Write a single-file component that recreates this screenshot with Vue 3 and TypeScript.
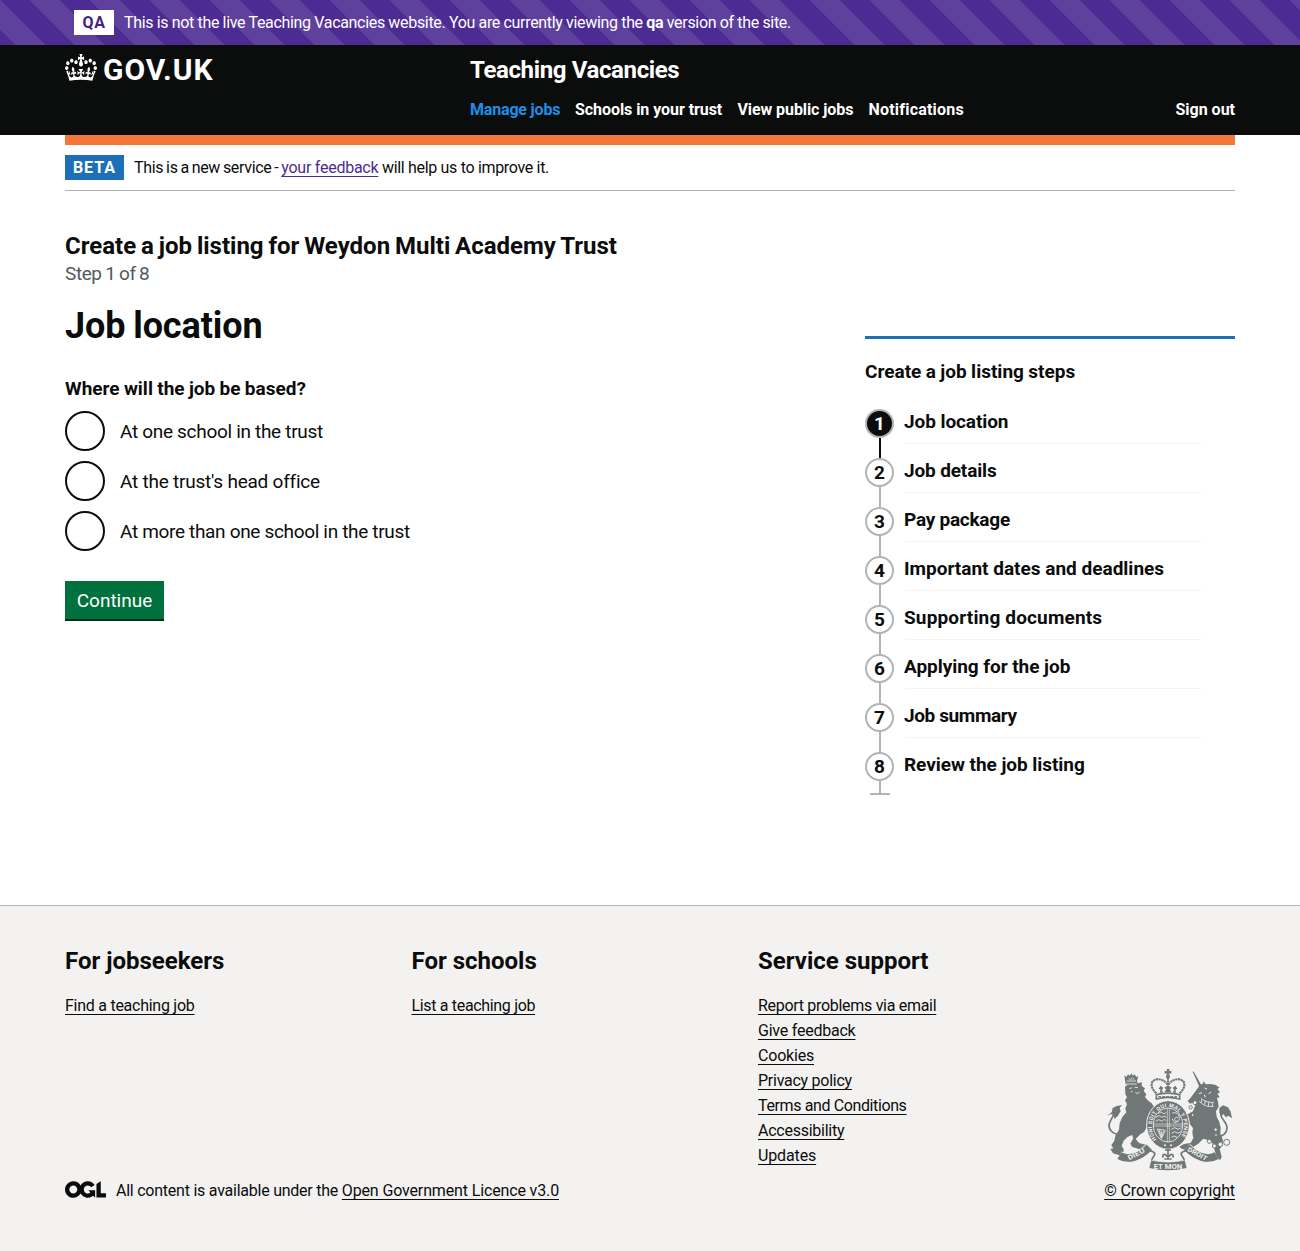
<script setup lang="ts">
interface NavLink {
  label: string
  width: number
  tracking: number
  active?: boolean
}

interface Label {
  text: string
  tracking: number
}

interface FooterSection {
  title: string
  links: Label[]
}

const navLinks: NavLink[] = [
  { label: 'Manage jobs', width: 105, tracking: -0.18, active: true },
  { label: 'Schools in your trust', width: 162.5, tracking: -0.06 },
  { label: 'View public jobs', width: 131, tracking: -0.09 },
  { label: 'Notifications', width: 96, tracking: 0.2 },
]

const options: Label[] = [
  { text: 'At one school in the trust', tracking: -0.31 },
  { text: "At the trust's head office", tracking: -0.23 },
  { text: 'At more than one school in the trust', tracking: -0.33 },
]

const steps: Label[] = [
  { text: 'Job location', tracking: -0.08 },
  { text: 'Job details', tracking: -0.14 },
  { text: 'Pay package', tracking: -0.25 },
  { text: 'Important dates and deadlines', tracking: 0 },
  { text: 'Supporting documents', tracking: 0.16 },
  { text: 'Applying for the job', tracking: -0.05 },
  { text: 'Job summary', tracking: -0.38 },
  { text: 'Review the job listing', tracking: -0.05 },
]
const currentStep = 0

const footerSections: FooterSection[] = [
  { title: 'For jobseekers', links: [{ text: 'Find a teaching job', tracking: -0.26 }] },
  { title: 'For schools', links: [{ text: 'List a teaching job', tracking: -0.33 }] },
  {
    title: 'Service support',
    links: [
      { text: 'Report problems via email', tracking: -0.3 },
      { text: 'Give feedback', tracking: -0.23 },
      { text: 'Cookies', tracking: -0.2 },
      { text: 'Privacy policy', tracking: -0.26 },
      { text: 'Terms and Conditions', tracking: -0.38 },
      { text: 'Accessibility', tracking: -0.25 },
      { text: 'Updates', tracking: -0.13 },
    ],
  },
]

const spacing = (px: number) => ({ letterSpacing: px + 'px' })
</script>

<template>
  <div class="page">
    <div class="env">
      <strong class="env-tag">QA</strong>
      <span class="env-text">This is not the live Teaching Vacancies website. You are currently viewing the <b>qa</b> version of the site.</span>
    </div>

    <header class="header">
      <div class="container header-inner">
        <a class="brand">
          <svg class="crown" viewBox="0 0 132 97" preserveAspectRatio="none" aria-hidden="true">
            <path fill="currentColor" d="M25 30.2c3.5 1.5 7.7-.2 9.1-3.7 1.5-3.6-.2-7.8-3.9-9.2-3.6-1.4-7.6.3-9.1 3.9-1.4 3.5.3 7.5 3.9 9zM9 39.5c3.6 1.5 7.8-.2 9.2-3.7 1.5-3.6-.2-7.8-3.9-9.1-3.6-1.5-7.6.2-9.1 3.8-1.4 3.5.3 7.5 3.8 9zM4.4 57.2c3.5 1.5 7.7-.2 9.1-3.8 1.5-3.6-.2-7.7-3.9-9.1-3.5-1.5-7.6.3-9.1 3.8-1.4 3.5.3 7.6 3.9 9.1zm38.3-21.4c3.5 1.5 7.7-.2 9.1-3.8 1.5-3.6-.2-7.7-3.9-9.1-3.6-1.5-7.6.3-9.1 3.8-1.3 3.6.4 7.7 3.9 9.1zm64.4-5.6c-3.6 1.5-7.8-.2-9.1-3.7-1.5-3.6.2-7.8 3.8-9.2 3.6-1.4 7.7.3 9.2 3.9 1.3 3.5-.4 7.5-3.9 9zm15.9 9.3c-3.6 1.5-7.7-.2-9.1-3.7-1.5-3.6.2-7.8 3.7-9.1 3.6-1.5 7.7.2 9.2 3.8 1.5 3.5-.3 7.5-3.8 9zm4.7 17.7c-3.6 1.5-7.8-.2-9.2-3.8-1.5-3.6.2-7.7 3.9-9.1 3.6-1.5 7.7.3 9.2 3.8 1.3 3.5-.4 7.6-3.9 9.1zM89.3 35.8c-3.6 1.5-7.8-.2-9.2-3.8-1.4-3.6.2-7.7 3.9-9.1 3.6-1.5 7.7.3 9.2 3.8 1.4 3.6-.3 7.7-3.9 9.1zM69.7 17.7l8.9 4.7V9.3l-8.9 2.8c-.2-.3-.5-.6-.9-.9L72.4 0H59.6l3.5 11.2c-.3.3-.6.5-.9.9l-8.8-2.8v13.1l8.8-4.7c.3.3.6.7.9.9l-5 15.4v.1c-.2.8-.4 1.6-.4 2.4 0 4.1 3.1 7.5 7 8.1h.2c.3 0 .7.1 1 .1.4 0 .7 0 1-.1h.2c4-.6 7.1-4.1 7.1-8.1 0-.8-.1-1.7-.4-2.4V34l-5.1-15.4c.4-.2.7-.6 1-.9zM66 92.8c16.9 0 32.8 1.1 47.1 3.2 4-16.9 8.9-26.7 14-33.5l-9.6-3.4c1 4.9 1.1 7.2 0 10.2-1.5-1.4-3-4.3-4.2-8.7L108.6 76c2.8-2 5-3.2 7.5-3.3-4.4 9.4-10 11.9-13.6 11.2-4.3-.8-6.3-4.6-5.6-7.9 1-4.7 5.7-5.9 8-.5 4.3-8.7-3-11.4-7.6-8.8 7.1-7.2 7.9-13.5 2.1-21.1-8 6.1-8.1 12.3-4.5 20.8-4.7-5.4-12.1-2.5-9.5 6.2 3.4-5.2 7.9-2 7.2 3.1-.6 4.3-6.4 7.8-13.5 7.2-10.3-.9-10.9-8-11.2-13.8 2.5-.5 7.1 1.8 11 7.3L80.2 60c-4.1 4.4-8 5.3-12.3 5.4 1.4-4.4 8-11.6 8-11.6H55.5s6.4 7.2 7.9 11.6c-4.2-.1-8-1-12.3-5.4l1.4 16.4c3.9-5.5 8.5-7.7 10.9-7.3-.3 5.8-.9 12.8-11.1 13.8-7.2.6-12.9-2.9-13.5-7.2-.7-5 3.8-8.3 7.1-3.1 2.7-8.7-4.6-11.6-9.4-6.2 3.7-8.5 3.6-14.7-4.6-20.8-5.8 7.6-5 13.9 2.2 21.1-4.7-2.6-11.9.1-7.7 8.8 2.3-5.5 7.1-4.2 8.1.5.7 3.3-1.3 7.1-5.7 7.9-3.5.7-9-1.8-13.5-11.2 2.5.1 4.7 1.3 7.5 3.3l-4.7-15.4c-1.2 4.4-2.7 7.2-4.3 8.7-1.1-3-.9-5.3 0-10.2l-9.5 3.4c5 6.9 9.9 16.7 14 33.5 14.8-2.1 30.8-3.2 47.7-3.2z" />
          </svg>
          <span class="brand-text">GOV.UK</span>
        </a>
        <div class="header-content">
          <a class="service-name">Teaching Vacancies</a>
          <nav class="nav">
            <a v-for="link in navLinks" :key="link.label" class="nav-link" :class="{ active: link.active }" :style="{ width: link.width + 'px', ...spacing(link.tracking) }">{{ link.label }}</a>
            <a class="nav-link sign-out">Sign out</a>
          </nav>
        </div>
      </div>
    </header>

    <div class="container">
      <div class="phase">
        <strong class="phase-tag">BETA</strong>
        <span class="phase-text"><span class="phase-lead">This is a new service - </span><a class="visited">your feedback</a> will help us to improve it.</span>
      </div>

      <div class="columns">
        <main class="main">
          <h2 class="title">Create a job listing for Weydon Multi Academy Trust</h2>
          <div class="caption">Step 1 of 8</div>
          <h1 class="heading">Job location</h1>
          <div class="legend">Where will the job be based?</div>
          <label v-for="option in options" :key="option.text" class="radio">
            <span class="radio-ring"></span>
            <span class="radio-label" :style="spacing(option.tracking)">{{ option.text }}</span>
          </label>
          <button class="button" type="button">Continue</button>
        </main>

        <aside class="sidebar">
          <h2 class="sidebar-title">Create a job listing steps</h2>
          <ol class="steps">
            <li v-for="(step, i) in steps" :key="step.text" class="step" :class="{ current: i === currentStep }">
              <div class="rail">
                <span class="number">{{ i + 1 }}</span>
                <span class="line"></span>
              </div>
              <div class="step-name" :style="spacing(step.tracking)">{{ step.text }}</div>
            </li>
          </ol>
        </aside>
      </div>
    </div>

    <footer class="footer">
      <div class="container footer-inner">
        <div class="footer-main">
          <div class="footer-nav">
            <section v-for="section in footerSections" :key="section.title">
              <h2 class="footer-title">{{ section.title }}</h2>
              <ul class="footer-list">
                <li v-for="link in section.links" :key="link.text"><a class="footer-link" :style="spacing(link.tracking)">{{ link.text }}</a></li>
              </ul>
            </section>
          </div>
          <div class="licence">
            <svg class="ogl" viewBox="0 0 483.2 195.7" aria-hidden="true">
              <path fill="currentColor" d="M421.5 142.8V.1l-50.7 32.3v161.1h112.4v-50.7zm-122.3-9.6A47.12 47.12 0 0 1 221 97.8c0-26 21.1-47.1 47.1-47.1 16.7 0 31.4 8.7 39.7 21.8l42.7-27.2A97.63 97.63 0 0 0 268.1 0c-36.5 0-68.3 20.1-85.1 49.7A98 98 0 0 0 97.8 0C43.9 0 0 43.9 0 97.8s43.9 97.8 97.8 97.8c36.5 0 68.3-20.1 85.1-49.7a97.76 97.76 0 0 0 149.6 25.4l19.4 22.2h3v-87.8h-80l24.3 27.5zM97.8 145c-26 0-47.1-21.1-47.1-47.1s21.1-47.1 47.1-47.1 47.1 21.1 47.1 47.1S123.8 145 97.8 145" />
            </svg>
            <span class="licence-text">All content is available under the <a class="footer-link licence-link">Open Government Licence v3.0</a></span>
          </div>
        </div>
        <div class="copyright">
          <svg class="crest" viewBox="51 27 375 306" aria-hidden="true">
            <defs>
              <path id="garter" d="M201 240A48 57 0 1 1 267 240" />
            </defs>
            <g fill="#6f7777">
              <!-- lion -->
              <path d="M103 46l6 5 5-8 6 4 4-7 5 7 5-4 5 8 6-3-4 14 2 9-36 3zM105 80l12-9 20 0 19-4-1 11 10 7-4 8 8 10-4 8 8 10 12 9 9 13-7 6 6 12-5 16-6 12 3 15-12-9-10 20-12 8-14 14 10 12 24 6-4 8 8 6-28-2-20-6-6-10 9-16-4-10-14 6-11 11-6 16 6 9-1 14-12 5-19-6-8-13 9-2-6-9 9-14 3-15 11-18 2-20 8-18 12-14-3-12 5-12-6-12 6-9-5-9z" />
              <path d="M92 224c-18 0-34-10-35-26-1-16 17-28 15-44" fill="none" stroke="#6f7777" stroke-width="5" />
              <path d="M51 167l14-10 3-13 12-6 16-3-7 9 3 9-8 14-11 10-2-12-8-3z" />
              <!-- unicorn -->
              <path d="M307 33l5 4 22 38-6 5zM330 75l8-3 2-8 8 9 14-1 15 3 12 8-7 4 8 10-8 4 7 11-8 2 3 12 2 14-8 14 2 16 8 16 4 17-1 18 8 20-3 18-7 8 6 24-4 8-20-3 7-12-5-16-6-19-14-9-13-4-16 16-14 8-12 10-22-3-8-7 14-8 20-3 8-15-3-16 2-14-14-17-12-5-3 13 8 9-8 10-11-5 2-16-13-16 5-13 15-6 15 5 16-9 6-16-1-12-14 5-7-8 9-10z" />
              <path d="M385 229c13 0 26-10 26-25 0-19-19-26-19-42 0-8 4-11 8-15" fill="none" stroke="#6f7777" stroke-width="5" />
              <path d="M388 144l11-8 15 6 8 13 4 20-11-8-7 5-8-10-5 6-7-10z" />
              <ellipse cx="234" cy="195" rx="64" ry="73" stroke="#f3f2f1" stroke-width="3" />
            </g>
            <!-- motto scroll -->
            <g fill="none" stroke="#6f7777">
              <path d="M88 287C116 303 150 290 178 262M380 287C352 303 318 290 290 262" stroke="#f3f2f1" stroke-width="28" />
              <path d="M88 287C116 303 150 290 178 262M380 287C352 303 318 290 290 262" stroke-width="23" />
              <path d="M176 272c12 2 22 5 17 14-4 8-12 12-6 20M292 272c-12 2-22 5-17 14 4 8 12 12 6 20" stroke-width="5" />
              <path d="M181 312Q234 325 287 312" stroke-width="24" />
              <path d="M225 270h18M234 268v30M220 293c-6-11 8-14 10-3M248 293c6-11-8-14-10-3M223 297h22" stroke-width="5" />
            </g>
            <!-- royal crown -->
            <g fill="none" stroke="#6f7777">
              <path d="M199 100c-21-20-17-38 0-42 13-2 26 4 34 16M269 100c21-20 17-38 0-42-13-2-26 4-34 16" stroke-width="6.5" stroke-dasharray="7 1.5" />
              <path d="M234 53v44" stroke-width="6" stroke-dasharray="6 2" />
              <path d="M199 104c22-6 48-6 70 0v13c-22-6-48-6-70 0z" stroke-width="5" />
              <path d="M205 110h58" stroke-width="4" stroke-dasharray="8 4" />
            </g>
            <g fill="#6f7777">
              <path d="M230 27h9l-2 7 7-2v9l-7-2 2 7h-10l2-7-7 2v-9l7 2z" />
              <circle cx="234" cy="50" r="6" />
              <path d="M209 98l3-9-6-3 6-9 8 7-4 5 3 9zM259 98l-3-9 6-3-6-9-8 7 4 5-3 9zM224 97l4-9-5-5 11-7 11 7-5 5 4 9z" />
            </g>
            <g fill="none" stroke="#f3f2f1">
              <ellipse cx="234" cy="195" rx="44" ry="51" stroke-width="2.5" />
              <path d="M232 146v100M190 192h88M238 146v100M190 198h88" stroke-width="1.8" />
              <path d="M197 172l11-5 8 5 6-4 7 4M197 184l9-5 10 5 7-6 6 5M205 160l8-4 8 5 8-3M246 160c8-5 20 0 22 11s-8 16-13 10 6-13 10-7M246 176l8 12 12-5M244 208l10-5 10 5 10-5M244 220l10-5 10 5 8-5M244 232l8-4 10 4M202 207l24 4-12 25zM207 210l8 22M213 212l3 18M220 213l-2 14" stroke-width="2.5" />
              <path d="M118 86l8-3M134 82l10 1M122 96l6-2M136 97l7 4 6-5M110 63h28M116 55l5 4 6-5 6 5M106 72h34" stroke-width="2.5" />
              <path d="M344 84l7 3M327 101l9-3M356 101l7-5M343 104l3 8" stroke-width="3" />
              <path d="M328 124c14 14 28 17 43 15M333 115c12 10 26 13 39 12M336 118l-3 10M346 122l-2 11M357 126l-2 12M367 127v12" stroke-width="2.5" />
              <path d="M180 300Q234 312 288 300" stroke-width="2" />
            </g>
            <g fill="#f3f2f1" stroke="#6f7777" stroke-width="3">
              <circle cx="377" cy="209" r="5" />
              <circle cx="378" cy="225" r="4" />
              <circle cx="358" cy="244" r="6" />
              <circle cx="373" cy="258" r="6" />
              <circle cx="391" cy="253" r="7" />
              <circle cx="410" cy="247" r="9" />
              <circle cx="315" cy="128" r="6" />
              <circle cx="302" cy="142" r="5" />
              <circle cx="308" cy="165" r="4" />
            </g>
            <g class="motto" fill="#f3f2f1">
              <text font-size="16"><textPath href="#garter" startOffset="2" textLength="240" lengthAdjust="spacing">HONI SOIT QUI MAL Y PENSE</textPath></text>
              <circle cx="225" cy="256" r="3" />
              <circle cx="243" cy="256" r="3" />
              <text x="191" y="326" font-size="21" textLength="86" lengthAdjust="spacingAndGlyphs">ET MON</text>
              <text transform="translate(118 301) rotate(-28)" font-size="20" textLength="54" lengthAdjust="spacingAndGlyphs">DIEU</text>
              <text transform="translate(291 272) rotate(29)" font-size="19" textLength="64" lengthAdjust="spacingAndGlyphs">DROIT</text>
            </g>
          </svg>
          <a class="footer-link">© Crown copyright</a>
        </div>
      </div>
    </footer>
  </div>
</template>

<style>
body {
  margin: 0;
  background: #fff;
}
</style>

<style scoped>
.page {
  font-family: Roboto, "Liberation Sans", sans-serif;
  font-size: 16px;
  line-height: 25px;
  color: #0b0c0c;
  height: 1251px;
  display: flex;
  flex-direction: column;
}

h1,
h2,
ol,
ul {
  margin: 0;
  padding: 0;
  list-style: none;
}

.container {
  box-sizing: border-box;
  width: 1170px;
  margin: 0 auto;
}

.env {
  box-sizing: border-box;
  display: flex;
  gap: 10px;
  height: 45px;
  padding: 10px 74px;
  color: #fff;
  background: repeating-linear-gradient(45deg, #4c2c92 0 10.607px, #5e419d 10.607px 31.82px, #4c2c92 31.82px 42.426px);
}

.env-tag {
  width: 40px;
  text-align: center;
  color: #3f2480;
  background: #fff;
  letter-spacing: 0.6px;
}

.env-text,
.phase-text {
  white-space: nowrap;
  letter-spacing: -0.32px;
}

.env-text {
  word-spacing: -0.13px;
}

.header {
  height: 90px;
  color: #fff;
  background: #0b0c0c;
}

.header-inner {
  display: flex;
}

.brand {
  display: flex;
  gap: 6px;
  width: 405px;
  padding-top: 9px;
}

.crown {
  width: 32px;
  height: 27px;
}

.brand-text {
  font-size: 30px;
  line-height: 32px;
  font-weight: 700;
  letter-spacing: 0.95px;
}

.header-content {
  flex: 1;
  padding-top: 10px;
}

.service-name {
  display: block;
  font-size: 24px;
  line-height: 30px;
  font-weight: 700;
  letter-spacing: -0.37px;
}

.nav {
  display: flex;
  margin-top: 12px;
  font-weight: 700;
}

.nav-link {
  white-space: nowrap;
}

.nav-link.active {
  color: #1d8feb;
}

.sign-out {
  margin-left: auto;
}

.phase {
  display: flex;
  gap: 10px;
  padding: 10px 0;
  border-top: 10px solid #f47738;
  border-bottom: 1px solid #b1b4b6;
}

.phase-tag {
  width: 59px;
  text-align: center;
  color: #fff;
  background: #1d70b8;
  letter-spacing: 1px;
}

.phase-lead {
  word-spacing: -0.8px;
}

.visited,
.footer-link {
  text-decoration: underline;
  text-decoration-thickness: 1px;
  text-underline-offset: 3px;
  text-decoration-skip-ink: none;
}

.visited {
  color: #4c2c92;
  letter-spacing: -0.25px;
}

.columns {
  display: flex;
  justify-content: space-between;
  height: 714px;
}

.main {
  padding-top: 40px;
}

.title {
  font-size: 24px;
  line-height: 30px;
  word-spacing: -1.1px;
}

.caption {
  font-size: 19px;
  color: #505a5f;
  letter-spacing: -0.4px;
  word-spacing: -0.8px;
}

.heading {
  margin: 20px 0 30px;
  font-size: 36px;
  line-height: 40px;
  letter-spacing: -0.1px;
  word-spacing: -1px;
}

.legend {
  margin-bottom: 10px;
  font-size: 19px;
  font-weight: 700;
  word-spacing: -0.4px;
}

.radio {
  display: flex;
  align-items: center;
  gap: 15px;
  height: 40px;
  margin-bottom: 10px;
  font-size: 19px;
}

.radio-ring {
  box-sizing: border-box;
  width: 40px;
  height: 40px;
  border: 2px solid #0b0c0c;
  border-radius: 50%;
}

.button {
  display: block;
  width: 99px;
  height: 38px;
  margin-top: 30px;
  padding: 0;
  border: 0;
  color: #fff;
  background: #00703c;
  box-shadow: 0 2px 0 #002d18;
  font: inherit;
  font-size: 19px;
}

.sidebar {
  align-self: flex-start;
  width: 370px;
  margin-top: 145px;
  padding-top: 20px;
  border-top: 3px solid #1d70b8;
}

.sidebar-title {
  margin-bottom: 25px;
  font-size: 19px;
  word-spacing: -0.3px;
}

.step {
  display: flex;
  gap: 11px;
  width: 336px;
  height: 49px;
  font-size: 19px;
  font-weight: 700;
}

.rail {
  display: flex;
  flex-direction: column;
  align-items: center;
  width: 29px;
}

.number {
  box-sizing: border-box;
  width: 29px;
  height: 29px;
  border: 2px solid #b1b4b6;
  border-radius: 50%;
  text-align: center;
}

.line {
  width: 2px;
  flex: 1;
  margin-left: 1px;
  background: #b1b4b6;
}

.step-name {
  flex: 1;
  height: 34px;
  border-bottom: 1px solid #f3f2f1;
  text-indent: -1px;
}

.current .number {
  color: #fff;
  background: #0b0c0c;
}

.current .line {
  background: #0b0c0c;
}

.step:last-child {
  height: 44px;
}

.step:last-child .step-name {
  border-bottom: 0;
}

.step:last-child .line {
  flex: none;
  box-sizing: border-box;
  width: 20px;
  height: 14px;
  border-bottom: 2px solid #b1b4b6;
  background: linear-gradient(#b1b4b6, #b1b4b6) 9px 0 / 2px 100% no-repeat;
}

.footer {
  flex: 1;
  border-top: 1px solid #b1b4b6;
  background: #f3f2f1;
}

.footer-inner {
  display: flex;
  justify-content: space-between;
  padding-top: 40px;
}

.footer-main {
  width: 1039px;
}

.footer-nav {
  display: grid;
  grid-template-columns: repeat(3, 346.5px);
}

.footer-title {
  margin-bottom: 17px;
  font-size: 24px;
  line-height: 30px;
}

.licence {
  display: flex;
  gap: 10px;
  margin-top: 10px;
  letter-spacing: -0.24px;
}

.licence-link {
  letter-spacing: -0.14px;
}

.ogl {
  width: 41px;
  height: 17px;
  margin-top: 3px;
}

.copyright {
  display: flex;
  flex-direction: column;
  align-items: flex-end;
  width: 131px;
  padding-top: 122px;
  white-space: nowrap;
  letter-spacing: -0.1px;
}

.crest {
  width: 125px;
  height: 102px;
  margin: 1px 3px 7px 0;
}

.motto {
  font-family: Roboto, sans-serif;
  font-weight: 700;
  letter-spacing: 0;
}
</style>
